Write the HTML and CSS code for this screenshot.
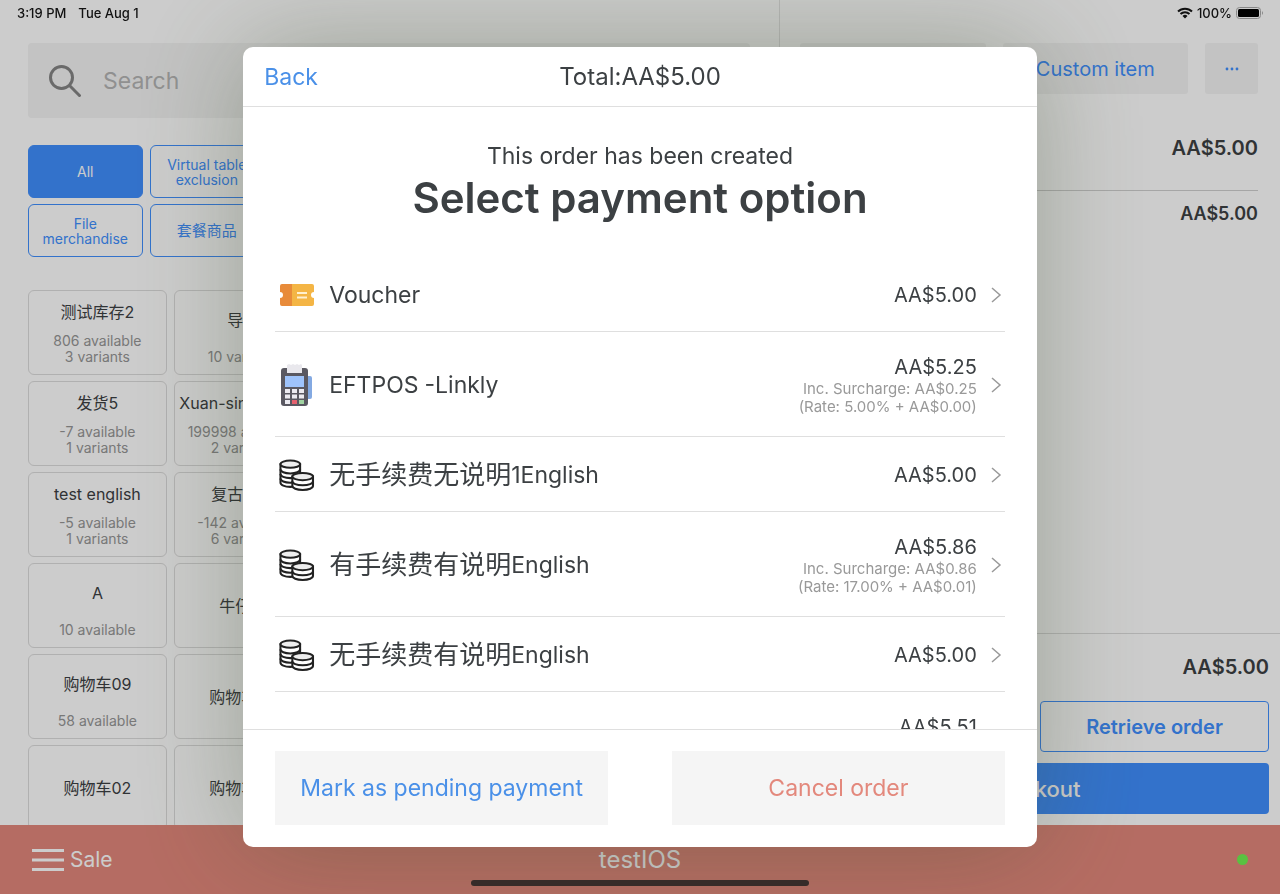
FILE: index.html
```html
<!DOCTYPE html>
<html lang="en">
<head>
  <meta charset="UTF-8" />
  <meta name="viewport" content="width=device-width, initial-scale=1.0" />
  <title>Select payment option</title>
  <link rel="stylesheet" href="styles.css">
</head>
<body>
  <svg class="sprite" aria-hidden="true">
    <symbol id="coins" viewBox="1 2 34 31">
      <g fill="#fff" stroke="#222" stroke-width="2">
        <path d="M2 7v18c0 2 4 4 9.500 4s9.500-2 9.500-4V7z" />
        <path d="M2 12c0 2.200 4 4 9.500 4s9.500-1.800 9.500-4M2 16.500c0 2.200 4 4 9.500 4s9.500-1.800 9.500-4M2 21c0 2.200 4 4 9.500 4s9.500-1.800 9.500-4" fill="none" />
        <ellipse cx="11.500" cy="7" rx="9.500" ry="3.500" fill="#eee" />
        <path d="M13.500 19v9c0 2.200 4 4 10 4s10-1.800 10-4v-9z" />
        <path d="M13.500 23.500c0 2.200 4 4 10 4s10-1.800 10-4" fill="none" />
        <ellipse cx="23.500" cy="19" rx="10" ry="3.500" fill="#eee" />
      </g>
    </symbol>
    <symbol id="chevron" viewBox="0 0 12 18">
      <path d="M2 2l8 7-8 7" fill="none" stroke="#999" stroke-width="1.500" />
    </symbol>
  </svg>

  <div class="app">
    <main class="panels">
      <section class="catalog">
        <label class="search">
          <svg class="search-icon" viewBox="0 0 32 32" aria-hidden="true">
            <circle cx="12.500" cy="12.500" r="11" />
            <path d="M20.500 20.500l11 11" />
          </svg>
          <input type="search" placeholder="Search" aria-label="Search">
        </label>

        <div class="categories">
          <div class="category-row">
            <button class="category active">All</button>
            <button class="category">Virtual table exclusion</button>
          </div>
          <div class="category-row">
            <button class="category">File merchandise</button>
            <button class="category zh">套餐商品</button>
          </div>
        </div>

        <div class="products">
          <div class="product-row">
            <button class="product"><span class="name">测试库存2</span><span class="stock">806 available<br>3 variants</span></button>
            <button class="product"><span class="name">导入</span><span class="stock">10 variants</span></button>
          </div>
          <div class="product-row">
            <button class="product"><span class="name">发货5</span><span class="stock">-7 available<br>1 variants</span></button>
            <button class="product"><span class="name">Xuan-single item</span><span class="stock">199998 available<br>2 variants</span></button>
          </div>
          <div class="product-row">
            <button class="product"><span class="name">test english</span><span class="stock">-5 available<br>1 variants</span></button>
            <button class="product"><span class="name">复古上衣</span><span class="stock">-142 available<br>6 variants</span></button>
          </div>
          <div class="product-row">
            <button class="product"><span class="name">A</span><span class="stock">10 available</span></button>
            <button class="product"><span class="name">牛仔裤</span></button>
          </div>
          <div class="product-row">
            <button class="product"><span class="name">购物车09</span><span class="stock">58 available</span></button>
            <button class="product"><span class="name">购物车08</span></button>
          </div>
          <div class="product-row">
            <button class="product"><span class="name">购物车02</span></button>
            <button class="product"><span class="name">购物车03</span></button>
          </div>
        </div>
      </section>

      <section class="cart">
        <div class="cart-top">
          <button class="tool" aria-label="Customer"></button>
          <button class="tool">Custom item</button>
          <button class="tool more" aria-label="More">
            <svg viewBox="0 0 14 4" aria-hidden="true"><circle cx="2" cy="2" r="1.400" /><circle cx="7" cy="2" r="1.400" /><circle cx="12" cy="2" r="1.400" /></svg>
          </button>
        </div>
        <div class="cart-item">AA$5.00</div>
        <div class="cart-subtotal">AA$5.00</div>
        <div class="cart-bottom">
          <div class="cart-total">AA$5.00</div>
          <div class="cart-actions">
            <button class="outline" aria-label="Save order"></button>
            <button class="outline">Retrieve order</button>
          </div>
          <button class="checkout">Checkout</button>
        </div>
      </section>
    </main>

    <footer class="bottom-bar">
      <button class="menu">
        <svg viewBox="0 0 32 24" aria-hidden="true"><path d="M0 2.500h32M0 12h32M0 21.500h32" /></svg>
        Sale
      </button>
      <span class="device">testIOS</span>
      <span class="online"></span>
    </footer>
  </div>

  <div class="overlay">
    <div class="modal" role="dialog" aria-labelledby="title">
      <header class="modal-header">
        <button class="back">Back</button>
        <span class="total">Total:AA$5.00</span>
      </header>

      <div class="modal-body">
        <p class="created">This order has been created</p>
        <h1 id="title">Select payment option</h1>
        <ul class="options">
          <li>
            <button class="option">
              <svg class="option-icon" viewBox="0 2 36 32" aria-hidden="true">
                <path d="M3 7h10v22H3q-2 0-2-2v-6a3 3 0 0 0 0-6V9q0-2 2-2z" fill="#e88b3a" />
                <path d="M13 7h20q2 0 2 2v6a3 3 0 0 0 0 6v6q0 2-2 2H13z" fill="#f4b545" />
                <path d="M18 16h10M18 20.500h10" stroke="#fff0cf" stroke-width="1.800" />
              </svg>
              <span class="label">Voucher</span>
              <span class="price">AA$5.00</span>
              <svg class="chevron" aria-hidden="true"><use href="#chevron" /></svg>
            </button>
          </li>
          <li>
            <button class="option">
              <svg class="option-icon tall" viewBox="0 0 36 44" aria-hidden="true">
                <rect x="26" y="13" width="7" height="23" rx="2" fill="#83a9e2" />
                <rect x="2" y="5" width="27" height="38" rx="3" fill="#5a5962" />
                <path d="M8 2l2-1 2 1 2-1 2 1 2-1 2 1 2-1 1 1v8H8z" fill="#e9e8ed" />
                <rect x="6" y="13" width="19" height="11" fill="#9ec3fb" />
                <path d="M6 26h5v4H6zM13 26h5v4h-5zM20 26h5v4h-5zM6 31.500h5v4H6zM13 31.500h5v4h-5zM20 31.500h5v4h-5zM6 37h5v4H6z" fill="#ecebf1" />
                <path d="M13 37h5v4h-5z" fill="#e5626f" />
                <path d="M20 37h5v4h-5z" fill="#a1d4a2" />
              </svg>
              <span class="label">EFTPOS<span class="provider">-Linkly</span></span>
              <span class="price">AA$5.25<small>Inc. Surcharge: AA$0.25<br>(Rate: 5.00% + AA$0.00)</small></span>
              <svg class="chevron" aria-hidden="true"><use href="#chevron" /></svg>
            </button>
          </li>
          <li>
            <button class="option">
              <svg class="option-icon" aria-hidden="true"><use href="#coins" /></svg>
              <span class="label"><span class="zh">无手续费无说明</span>1English</span>
              <span class="price">AA$5.00</span>
              <svg class="chevron" aria-hidden="true"><use href="#chevron" /></svg>
            </button>
          </li>
          <li>
            <button class="option">
              <svg class="option-icon" aria-hidden="true"><use href="#coins" /></svg>
              <span class="label"><span class="zh">有手续费有说明</span>English</span>
              <span class="price">AA$5.86<small>Inc. Surcharge: AA$0.86<br>(Rate: 17.00% + AA$0.01)</small></span>
              <svg class="chevron" aria-hidden="true"><use href="#chevron" /></svg>
            </button>
          </li>
          <li>
            <button class="option">
              <svg class="option-icon" aria-hidden="true"><use href="#coins" /></svg>
              <span class="label"><span class="zh">无手续费有说明</span>English</span>
              <span class="price">AA$5.00</span>
              <svg class="chevron" aria-hidden="true"><use href="#chevron" /></svg>
            </button>
          </li>
          <li>
            <button class="option">
              <svg class="option-icon" aria-hidden="true"><use href="#coins" /></svg>
              <span class="label"></span>
              <span class="price">AA$5.51<small>Inc. Surcharge: AA$0.51<br>(Rate: 10.00% + AA$0.01)</small></span>
              <svg class="chevron" aria-hidden="true"><use href="#chevron" /></svg>
            </button>
          </li>
        </ul>
      </div>

      <footer class="modal-footer">
        <button class="action">Mark as pending payment</button>
        <button class="action danger">Cancel order</button>
      </footer>
    </div>
  </div>

  <div class="status-bar">
    <span>3:19 PM</span>
    <span>Tue Aug 1</span>
    <span class="battery">
      <svg class="wifi" viewBox="0 0 16 12" aria-hidden="true">
        <path d="M1 4.500a10 10 0 0 1 14 0M3.500 7a6.500 6.500 0 0 1 9 0" fill="none" stroke="#111" stroke-width="2" />
        <path d="M8 11.500L5.500 9a3.600 3.600 0 0 1 5 0z" fill="#111" />
      </svg>
      100%
      <svg class="cell" viewBox="0 0 28 12" aria-hidden="true">
        <rect x=".5" y=".5" width="24" height="11" rx="3" fill="none" stroke="#888" />
        <rect x="2" y="2" width="21" height="8" rx="1.500" fill="#000" />
        <path d="M26 4q2 2 0 4z" fill="#888" />
      </svg>
    </span>
  </div>
  <div class="home-indicator"></div>
</body>
</html>
```
FILE: styles.css
```css
* {
  box-sizing: border-box;
}
body {
  margin: 0;
  font-family: Inter, "Noto Sans CJK SC", sans-serif;
  color: #3c4043;
  background: #fff;
}
button {
  font: inherit;
  color: inherit;
  background: none;
  border: none;
  padding: 0;
  cursor: pointer;
}
.sprite {
  display: none;
}
.app {
  height: 100vh;
  display: flex;
  flex-direction: column;
}
.panels {
  flex: 1;
  min-height: 0;
  display: grid;
  grid-template-columns: 14fr 9fr;
  grid-template-rows: 100%;
}

/* catalog */
.catalog {
  padding: 43px 29px 0 28px;
  overflow: hidden;
}
.search {
  display: flex;
  align-items: center;
  gap: 22px;
  height: 75px;
  padding: 0 21px;
  background: #f4f4f4;
  border-radius: 4px;
}
.search-icon {
  width: 32px;
  height: 32px;
  fill: none;
  stroke: #858585;
  stroke-width: 3;
}
.search input {
  flex: 1;
  min-width: 0;
  padding: 0;
  border: none;
  outline: none;
  background: none;
  font: inherit;
  font-size: 23px;
}
.search input::placeholder {
  color: #b5b5b5;
}
.categories {
  display: grid;
  gap: 6px;
  margin-top: 27px;
}
.category-row {
  display: grid;
  grid-template-columns: repeat(6, 1fr);
  gap: 7px;
}
.category {
  height: 53px;
  font-size: 14px;
  line-height: 15px;
  color: #408ffe;
  border: 1px solid #408ffe;
  border-radius: 6px;
}
.category.zh {
  font-size: 15px;
}
.category.active {
  color: #fff;
  background: #408ffe;
}
.products {
  display: grid;
  gap: 6px;
  margin-top: 33px;
}
.product-row {
  display: grid;
  grid-template-columns: repeat(5, 1fr);
  gap: 7px;
}
.product {
  display: flex;
  flex-direction: column;
  height: 85px;
  border: 1px solid #dcdcdc;
  border-radius: 6px;
  text-align: center;
}
.product .name {
  flex: 1;
  width: 100%;
  display: flex;
  align-items: center;
  justify-content: center;
  font-size: 16px;
  line-height: 20px;
  white-space: nowrap;
}
.product .stock {
  width: 100%;
  padding-bottom: 9px;
  font-size: 14px;
  line-height: 16px;
  color: #969696;
}

/* cart */
.cart {
  display: flex;
  flex-direction: column;
  border-left: 1px solid #e4e4e4;
  font-weight: 600;
  text-align: right;
}
.cart-top {
  display: flex;
  gap: 17px;
  padding: 43px 22px 0 20px;
}
.tool {
  flex: 1;
  height: 51px;
  font-size: 20px;
  font-weight: 400;
  color: #408ffe;
  background: #f4f4f4;
  border-radius: 3px;
}
.tool.more {
  display: flex;
  align-items: center;
  justify-content: center;
  flex: 0 0 53px;
}
.tool svg {
  width: 14px;
  height: 4px;
  fill: #408ffe;
}
.cart-item {
  margin: 0 22px 0 20px;
  padding: 41px 0 29px;
  border-bottom: 1px solid #d0d0d0;
  font-size: 20px;
  line-height: 26px;
}
.cart-subtotal {
  margin: 10px 22px 0 20px;
  font-size: 18px;
  line-height: 26px;
}
.cart-bottom {
  margin-top: auto;
  padding: 20px 11px 11px;
  border-top: 1px solid #dcdcdc;
}
.cart-total {
  font-size: 20px;
  line-height: 26px;
}
.cart-actions {
  display: flex;
  gap: 20px;
  margin: 21px 0 11px;
}
.outline,
.checkout {
  height: 51px;
  border-radius: 4px;
  font-size: 20px;
  font-weight: 600;
}
.outline {
  flex: 1;
  color: #408ffe;
  border: 1px solid #408ffe;
}
.checkout {
  display: block;
  width: 100%;
  font-size: 22px;
  font-weight: 500;
  color: #fff;
  background: #408ffe;
}

/* bottom bar */
.bottom-bar {
  display: grid;
  grid-template-columns: 1fr auto 1fr;
  align-items: center;
  height: 69px;
  padding: 0 32px;
  color: #fff;
  background: #e3887c;
}
.menu {
  justify-self: start;
  display: flex;
  align-items: center;
  gap: 6px;
  font-size: 21px;
}
.menu svg {
  width: 32px;
  height: 24px;
  stroke: #fff;
  stroke-width: 3;
}
.device {
  font-size: 24px;
}
.online {
  justify-self: end;
  width: 11px;
  height: 11px;
  border-radius: 50%;
  background: #70f252;
}

/* payment modal */
.overlay {
  position: fixed;
  inset: 0;
  display: flex;
  justify-content: center;
  padding: 47px 0;
  background: rgba(0, 0, 0, 0.2);
}
.modal {
  display: flex;
  flex-direction: column;
  width: 62%;
  background: #fff;
  border-radius: 10px;
  overflow: hidden;
  box-shadow: 0 0 110px rgba(60, 75, 40, 0.34);
}
.modal-header {
  display: grid;
  grid-template-columns: 1fr auto 1fr;
  align-items: center;
  height: 60px;
  padding: 0 21px;
  border-bottom: 1px solid #dfdfdf;
  font-size: 24px;
}
.back {
  justify-self: start;
  font-size: 23px;
  color: #4a90e8;
}
.modal-body {
  flex: 1;
  min-height: 0;
  padding: 34px 32px 0;
  overflow-y: auto;
  scrollbar-width: none;
}
.created {
  margin: 0;
  font-size: 23px;
  line-height: 30px;
  text-align: center;
}
h1 {
  margin: 0 0 32px;
  font-size: 42px;
  font-weight: 600;
  line-height: 54px;
  text-align: center;
}
.options {
  margin: 0;
  padding: 0;
  list-style: none;
}
.options li {
  border-bottom: 1px solid #dfdfdf;
}
.option {
  display: flex;
  align-items: center;
  width: 100%;
  padding: 22px 3px 20px 4px;
  text-align: left;
}
.option-icon {
  width: 36px;
  height: 32px;
  margin-right: 14px;
}
.option-icon.tall {
  height: 44px;
}
.label {
  flex: 1;
  display: flex;
  align-items: center;
  font-size: 23px;
  line-height: 32px;
}
.label .zh {
  font-size: 26px;
}
.provider {
  margin-left: 6px;
}
.price {
  font-size: 20px;
  line-height: 26px;
  text-align: right;
}
.price small {
  display: block;
  font-size: 15px;
  line-height: 18px;
  color: #999;
}
.chevron {
  width: 12px;
  height: 18px;
  margin-left: 13px;
}
.modal-footer {
  display: grid;
  grid-template-columns: 1fr 1fr;
  gap: 64px;
  padding: 21px 32px 22px;
  border-top: 1px solid #dfdfdf;
}
.action {
  height: 74px;
  font-size: 23px;
  color: #4a90e8;
  background: #f5f5f5;
}
.action.danger {
  color: #e3887c;
}

/* system bars */
.status-bar {
  position: fixed;
  top: 0;
  left: 0;
  right: 0;
  display: flex;
  gap: 12px;
  padding: 5px 16px 0 17px;
  font-size: 13px;
  font-weight: 500;
  line-height: 16px;
  color: #111;
}
.battery {
  display: flex;
  align-items: center;
  gap: 4px;
  margin-left: auto;
}
.wifi {
  width: 16px;
  height: 12px;
}
.cell {
  width: 28px;
  height: 12px;
}
.home-indicator {
  position: fixed;
  bottom: 8px;
  left: 50%;
  width: 338px;
  height: 6px;
  margin-left: -169px;
  border-radius: 3px;
  background: #352b29;
}
```
